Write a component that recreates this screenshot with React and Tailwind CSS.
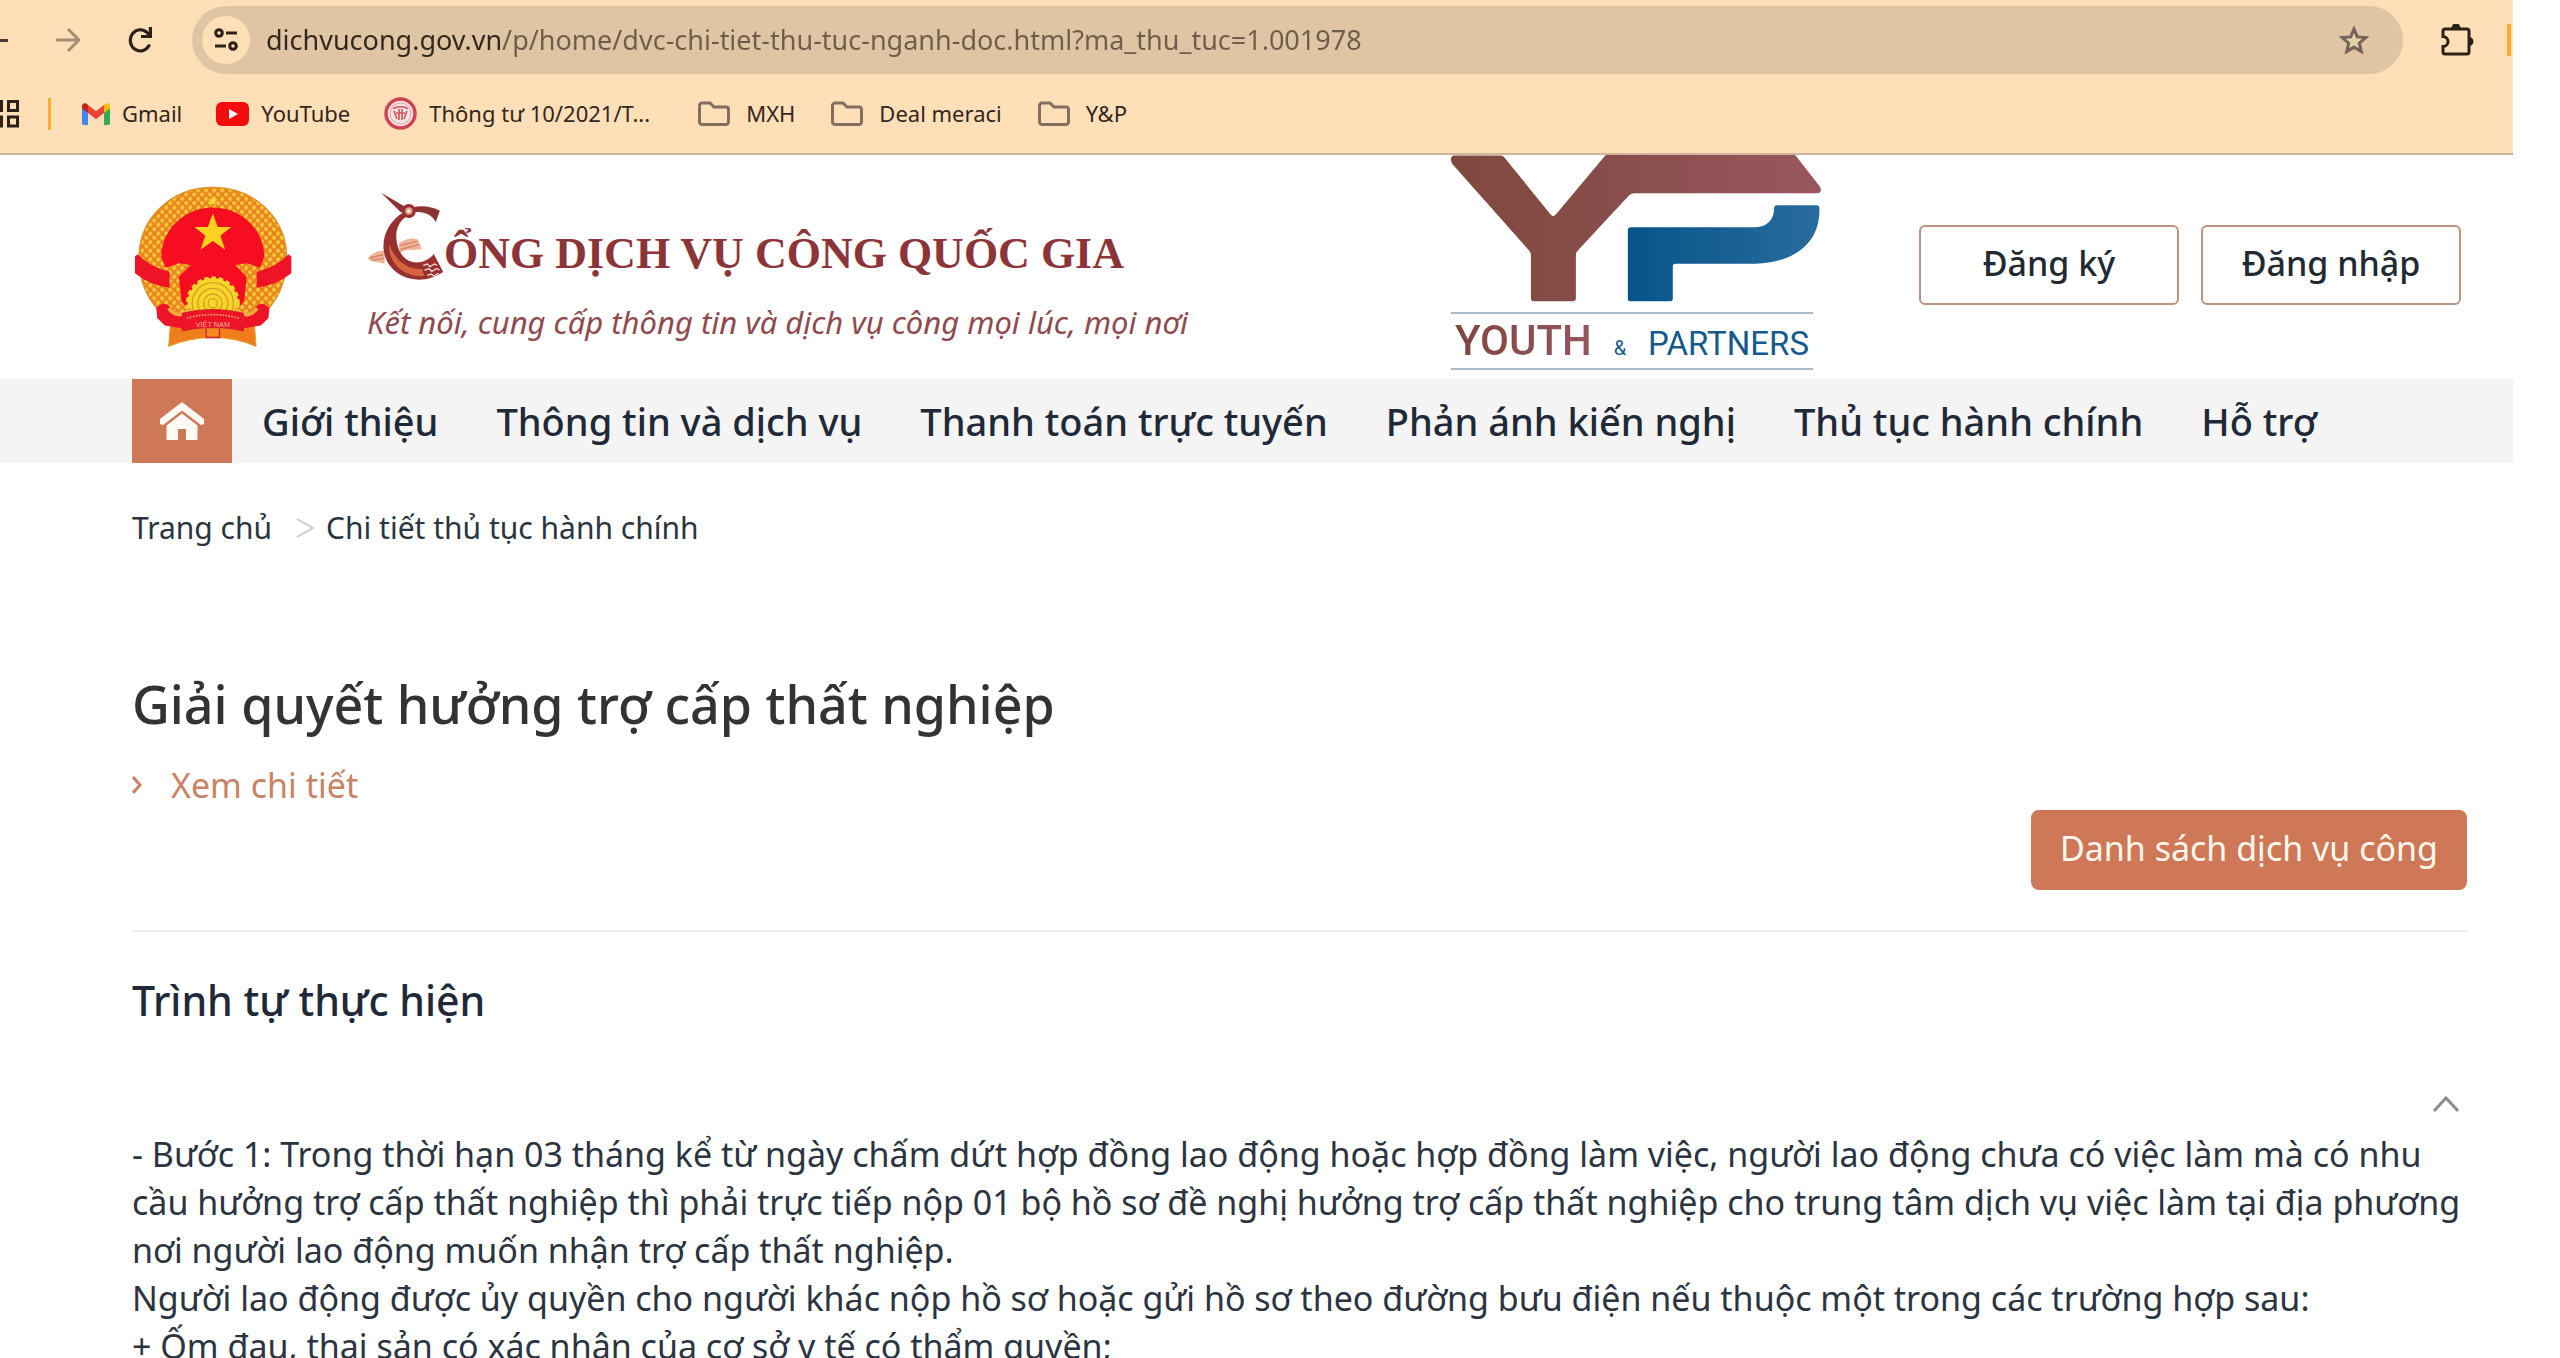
import React from "react";

const NAV_LINKS = [
  "Giới thiệu",
  "Thông tin và dịch vụ",
  "Thanh toán trực tuyến",
  "Phản ánh kiến nghị",
  "Thủ tục hành chính",
  "Hỗ trợ",
];

function ForwardIcon() {
  return (
    <svg className="h-6 w-6" viewBox="0 0 24 24" fill="none" stroke="#a58e78" strokeWidth="3">
      <path d="M0 12h22M12 1l11 11-11 11" />
    </svg>
  );
}

function ReloadIcon() {
  return (
    <svg className="h-[26px] w-6" viewBox="0 0 24 26" fill="none" stroke="#2b2117" strokeWidth="3.2">
      <path d="M21.5 17.5A10 10.6 0 1 1 19.500 6L22 9" />
      <path d="M22.400 0v9.500H13" />
    </svg>
  );
}

function TuneIcon() {
  return (
    <svg className="h-6 w-6" viewBox="0 0 24 24" fill="none" stroke="#2b2117" strokeWidth="3">
      <circle cx="5" cy="5" r="3.300" />
      <path d="M12 5h11" />
      <circle cx="19" cy="18" r="3.300" />
      <path d="M1 18h11" />
    </svg>
  );
}

function StarIcon() {
  return (
    <svg className="h-7 w-[30px]" viewBox="0 0 30 28" fill="#e3d3a0" stroke="#75625a" strokeWidth="3">
      <path d="M15 3l3.300 7.900 8.500.7-6.500 5.600 2 8.300-7.300-4.400-7.300 4.400 2-8.300-6.500-5.600 8.500-.7z" />
    </svg>
  );
}

function PuzzleIcon() {
  return (
    <svg className="h-8 w-[34px]" viewBox="0 0 34 32">
      <path d="M10.500 4a4.500 4.500 0 0 1 9 0zM28 13a4.500 4.500 0 0 1 0 9z" fill="#2b2117" />
      <path
        d="M4 5h22a2 2 0 0 1 2 2v21a2 2 0 0 1-2 2H4a2 2 0 0 1-2-2v-5.500a5 5 0 0 0 0-10V7a2 2 0 0 1 2-2z"
        fill="none"
        stroke="#2b2117"
        strokeWidth="3"
      />
    </svg>
  );
}

function AppsIcon() {
  return (
    <svg className="h-7 w-5" viewBox="0 0 20 28" fill="none" stroke="#2b2117" strokeWidth="3">
      <path d="M-6 1.500h7.500v9H-6M-6 17h7.500v9H-6" />
      <rect x="8.500" y="1.500" width="9" height="9" />
      <rect x="8.500" y="17" width="9" height="9" />
    </svg>
  );
}

function GmailIcon() {
  return (
    <svg className="h-[22px] w-7" viewBox="0 0 28 22">
      <path d="M0 5v15a2 2 0 0 0 2 2h4V8z" fill="#4285f4" />
      <path d="M28 5v15a2 2 0 0 1-2 2h-4V8z" fill="#34a853" />
      <path d="M22 2v8l6-4.500V3.500C28 .5 24.600-1 22 2z" fill="#fbbc04" />
      <path d="M6 2v8L0 5.500V3.500C0 .5 3.400-1 6 2z" fill="#c5221f" />
      <path d="M6 2l8 6.200L22 2v8l-8 6.200L6 10z" fill="#ea4335" />
    </svg>
  );
}

function YoutubeIcon() {
  return (
    <svg className="h-6 w-[33px]" viewBox="0 0 33 24">
      <rect width="33" height="24" rx="6" fill="#f40b0b" />
      <path d="M13 7l9 5-9 5z" fill="#fff" />
    </svg>
  );
}

function SealIcon() {
  return (
    <svg className="h-[33px] w-[33px]" viewBox="0 0 33 33">
      <circle cx="16.500" cy="16.500" r="14.500" fill="#f9e4e2" stroke="#cf4250" strokeWidth="3.400" />
      <circle cx="16.500" cy="16.500" r="10.500" fill="none" stroke="#e69aa0" strokeWidth="1" />
      <path d="M9 12c3-3 12-3 15 0M10 14l3 8M15 12v11M18 12v11M23 14l-3 8M12 16h9" fill="none" stroke="#cf5560" strokeWidth="1.600" />
    </svg>
  );
}

function FolderIcon() {
  return (
    <svg className="h-[26px] w-8" viewBox="0 0 32 26" fill="none" stroke="#836f60" strokeWidth="3">
      <path d="M4 2h8l4 4h12a2.500 2.500 0 0 1 2.500 2.500V21a2.500 2.500 0 0 1-2.500 2.500H4A2.500 2.500 0 0 1 1.500 21V4.500A2.500 2.500 0 0 1 4 2z" />
    </svg>
  );
}

function HomeIcon() {
  return (
    <svg className="h-[38px] w-[44px]" viewBox="0 0 44 38" fill="#fffaf3">
      <path d="M22 0L0 17v5l3 1L22 8.500 41 23l3-1v-5z" />
      <path d="M22 11.500L6.500 23.500V38H18V27h8v11h11.500V23.500z" />
    </svg>
  );
}

function Emblem() {
  return (
    <svg className="h-[165px] w-[163px] shrink-0" viewBox="95 70 490 495" role="img" aria-label="Quốc huy Việt Nam">
      <defs>
        <pattern id="grain" width="24" height="26" patternUnits="userSpaceOnUse">
          <rect width="24" height="26" fill="#e8861f" />
          <ellipse cx="6" cy="7" rx="5" ry="6.500" fill="#f9cf3a" transform="rotate(25 6 7)" />
          <ellipse cx="18" cy="20" rx="5" ry="6.500" fill="#f9cf3a" transform="rotate(-25 18 20)" />
        </pattern>
      </defs>
      <path d="M212 470L205 555Q270 528 338 528T468 555L462 470z" fill="#f07d1c" stroke="#e3a83a" strokeWidth="3" />
      <path
        d="M338 77C465 77 558 170 560 285C562 360 530 430 470 475H206C146 430 114 360 116 285C118 170 211 77 338 77z"
        fill="url(#grain)"
        stroke="#e0902a"
        strokeWidth="4"
      />
      <path
        d="M338 137C425 137 492 205 493 285L480 318L440 305L405 310L440 345L432 420L400 455H276L244 420L236 345L272 310L236 305L196 318L183 285C184 205 251 137 338 137z"
        fill="#f60d22"
      />
      <path d="M338 155L353 196L393 196L361 222L375 264L338 238L301 264L315 222L283 196L323 196z" fill="#fbd21f" />
      <path d="M338 103l4 9 10 1-8 7 3 10-9-6-9 6 3-10-8-7 10-1z" fill="#fbdc2f" />
      <circle cx="338" cy="425" r="76" fill="#f7d62c" stroke="#f7d62c" strokeWidth="10" strokeDasharray="13 9" />
      <g fill="none" stroke="#d69b23" strokeWidth="4">
        <circle cx="338" cy="425" r="62" />
        <circle cx="338" cy="425" r="45" />
        <circle cx="338" cy="425" r="28" />
        <circle cx="338" cy="425" r="14" />
      </g>
      <path d="M104 285L112 278Q150 318 208 330V378Q150 372 104 335z" fill="#ee1327" />
      <path d="M574 285L566 278Q528 318 470 330V378Q528 372 574 335z" fill="#ee1327" />
      <path d="M168 440Q190 415 210 436Q238 470 338 462Q438 470 466 436Q486 415 508 440L505 470L482 492L430 500H246L194 492L171 470z" fill="#ee1327" />
      <path d="M205 440Q238 478 272 440M471 440Q438 478 404 440" fill="none" stroke="#f2a93c" strokeWidth="12" />
      <path d="M246 455Q338 432 430 455V508Q338 486 246 508z" fill="#ee1327" stroke="#d42228" strokeWidth="3" />
      <path d="M318 498h40v30h-40z" fill="#ee8a1e" stroke="#d42228" strokeWidth="4" />
      <path d="M260 470Q338 448 416 470" fill="none" stroke="#f4a07a" strokeWidth="5" strokeDasharray="5 4" />
      <text x="338" y="495" textAnchor="middle" fontFamily="Liberation Sans, sans-serif" fontSize="22" fill="#f7b08a">
        VIỆT NAM
      </text>
    </svg>
  );
}

// The capital C of the title, drawn as a stylised crane.
function CraneC() {
  return (
    <svg className="h-[90px] w-[77px] shrink-0" viewBox="50 68 230 270" role="img" aria-label="C">
      <path d="M52 268C65 250 85 242 103 246L102 284C88 276 66 280 52 268z" fill="#eeb59a" />
      <path d="M145 222C165 206 190 204 203 212L214 240C194 244 168 236 148 252z" fill="#eeb59a" />
      <path d="M58 266l40-10M62 273l38-6M150 228l50-12M150 240l56-14" stroke="#d2825f" strokeWidth="4" fill="none" />
      <path d="M92 70L160 110L170 132L150 128z" fill="#8d3234" />
      <path d="M160 128C105 160 80 230 115 285C145 330 215 350 278 308L250 254C220 290 165 290 145 240C128 195 140 155 172 140z" fill="#98302f" />
      <path d="M116 225C112 280 160 325 222 320L215 300C170 300 135 275 116 225z" fill="#d5653c" />
      <path d="M192 112C220 108 248 112 268 124L256 158C245 136 222 126 194 128z" fill="#8d3234" />
      <circle cx="175" cy="125" r="16" fill="#e8a183" stroke="#98302f" strokeWidth="10" />
      <circle cx="175" cy="125" r="5" fill="#fff" />
      <path d="M218 288l12-4 8 8 14-8 8 4M222 302l14-4 8 8 14-8 10 4M230 318l12-4 8 6 14-8" stroke="#f3d6cf" strokeWidth="4" fill="none" />
    </svg>
  );
}

function PartnerLogo() {
  return (
    <div className="w-[370px] shrink-0 self-start">
      <svg className="h-[147px] w-full" viewBox="90 45 1111 441" role="img" aria-label="YP">
        <defs>
          <linearGradient id="wine" x1="0" x2="1">
            <stop offset="0" stopColor="#80493f" />
            <stop offset="0.400" stopColor="#874d4a" />
            <stop offset="1" stopColor="#99565f" />
          </linearGradient>
          <linearGradient id="navy" x1="0" x2="1">
            <stop offset="0" stopColor="#075489" />
            <stop offset="1" stopColor="#286c9d" />
          </linearGradient>
        </defs>
        <path
          d="M98 46H238Q246 46 251 53L388 222Q397 234 406 222L550 50Q556 42 566 42H1114Q1121 42 1126 48L1198 140Q1206 158 1190 160H640Q630 160 623 168L470 332Q465 338 465 345V474Q465 484 455 484H340Q330 484 330 474V345Q330 337 325 332L94 72Q84 50 98 46z"
          fill="url(#wine)"
        />
        <path
          d="M630 262H1005C1040 260 1060 238 1060 206Q1060 196 1070 196H1188Q1196 196 1196 204C1200 310 1120 368 1005 371H764Q756 371 756 379V476Q756 484 748 484H629Q621 484 621 476V271Q621 262 630 262z"
          fill="url(#navy)"
        />
      </svg>
      <div className="mt-[10px] flex h-[58px] w-[362px] items-baseline justify-between border-y-2 border-[#a9bccb] px-1 font-['Roboto',sans-serif] leading-[54px]">
        <span className="bg-linear-to-r from-[#80453f] to-[#965660] bg-clip-text text-[42px] font-medium text-transparent">YOUTH</span>
        <span className="text-[20px] text-[#14598c]">&amp;</span>
        <span className="text-[33px] text-[#14598c]">PARTNERS</span>
      </div>
    </div>
  );
}

function Bookmark({ icon, className, children }) {
  return (
    <a href="#" className={`flex items-center ${className}`}>
      {icon}
      {children}
    </a>
  );
}

function BrowserBar() {
  return (
    <header className="border-b-2 border-[#d0b49c] bg-[#ffdfb8] text-[#33261b]">
      <div className="flex items-center pt-[6px]">
        <div className="flex w-48 shrink-0 items-center gap-12">
          <button aria-label="Quay lại" className="h-[3px] w-2 bg-[#4a3c30]" />
          <button aria-label="Tiến"><ForwardIcon /></button>
          <button aria-label="Tải lại"><ReloadIcon /></button>
        </div>
        <div className="flex h-[68px] flex-1 items-center rounded-full bg-[#dfc5a3] pr-[34px] pl-[10px]">
          <button aria-label="Thông tin trang web" className="flex h-12 w-12 items-center justify-center rounded-full bg-[#ffdfb8]">
            <TuneIcon />
          </button>
          <input
            aria-label="Địa chỉ"
            className="ml-4 flex-1 bg-[linear-gradient(90deg,#33261b_236px,#6f5d4b_236px)] bg-clip-text text-[27px] text-transparent outline-none"
            defaultValue="dichvucong.gov.vn/p/home/dvc-chi-tiet-thu-tuc-nganh-doc.html?ma_thu_tuc=1.001978"
          />
          <button aria-label="Đánh dấu trang"><StarIcon /></button>
        </div>
        <button aria-label="Tiện ích" className="ml-[38px]"><PuzzleIcon /></button>
        <div className="mr-[2px] ml-8 h-8 w-1 bg-[#ffab2e]" />
      </div>
      <nav aria-label="Dấu trang" className="flex h-[79px] items-center text-[22px]">
        <button aria-label="Ứng dụng"><AppsIcon /></button>
        <div className="ml-7 h-8 w-[3px] bg-[#ffab2e]" />
        <div className="ml-[31px] flex items-center gap-[34px]">
          <Bookmark className="gap-3" icon={<GmailIcon />}>Gmail</Bookmark>
          <Bookmark className="gap-3" icon={<YoutubeIcon />}>YouTube</Bookmark>
          <Bookmark className="gap-3" icon={<SealIcon />}>Thông tư 10/2021/T...</Bookmark>
        </div>
        <div className="ml-12 flex items-center gap-9">
          <Bookmark className="gap-4" icon={<FolderIcon />}>MXH</Bookmark>
          <Bookmark className="gap-4" icon={<FolderIcon />}>Deal meraci</Bookmark>
          <Bookmark className="gap-4" icon={<FolderIcon />}>Y&amp;P</Bookmark>
        </div>
      </nav>
    </header>
  );
}

function SiteHeader() {
  return (
    <div className="flex h-56 items-center pr-[52px] pl-[132px]">
      <Emblem />
      <div className="ml-[72px]">
        <div className="flex items-end">
          <CraneC />
          <span className="font-['Liberation_Serif',serif] text-[44px] leading-[56px] font-bold text-[#8c3438]">
            ỔNG DỊCH VỤ CÔNG QUỐC GIA
          </span>
        </div>
        <p className="mt-5 text-[31px] leading-10 text-[#8f4a50] italic">
          Kết nối, cung cấp thông tin và dịch vụ công mọi lúc, mọi nơi
        </p>
      </div>
      <div className="ml-auto flex h-full items-center gap-[98px]">
        <PartnerLogo />
        <div className="flex gap-[22px] pb-1 text-[34px] font-medium text-[#1f2a33]">
          <button className="h-20 w-[260px] rounded-md border-2 border-[#bd9482] pb-1">Đăng ký</button>
          <button className="h-20 w-[260px] rounded-md border-2 border-[#bd9482] pb-1">Đăng nhập</button>
        </div>
      </div>
    </div>
  );
}

export default function App() {
  return (
    <div className="h-screen overflow-hidden bg-white font-['Noto_Sans',sans-serif] text-[#2b3440]">
      <div className="mr-[47px]">
        <BrowserBar />
        <SiteHeader />
        <nav aria-label="Chính" className="flex h-[84px] items-center bg-[#f4f4f5] pl-[132px] text-[38px] font-medium text-[#1f2937]">
          <a href="#" aria-label="Trang chủ" className="flex h-full w-[100px] items-center justify-center bg-[#cf7858]">
            <HomeIcon />
          </a>
          <div className="ml-[30px] flex gap-[58px]">
            {NAV_LINKS.map((label) => (
              <a key={label} href="#" className="whitespace-nowrap">{label}</a>
            ))}
          </div>
        </nav>
        <main className="pr-[46px] pl-[132px]">
          <nav aria-label="Đường dẫn" className="mt-[45px] flex items-center text-[30px] leading-10">
            <a href="#">Trang chủ</a>
            <svg className="mr-3 ml-6 h-5 w-[18px]" viewBox="0 0 18 20" fill="none" stroke="#c9c9cb" strokeWidth="2">
              <path d="M1 1l16 9-16 9" />
            </svg>
            <a href="#">Chi tiết thủ tục hành chính</a>
          </nav>
          <h1 className="mt-[120px] text-[52px] leading-[72px] font-medium text-[#333333]">
            Giải quyết hưởng trợ cấp thất nghiệp
          </h1>
          <a href="#" className="mt-[21px] inline-flex items-center gap-[29px] text-[34px] leading-12 text-[#c88364]">
            <svg className="h-5 w-[10px]" viewBox="0 0 10 20" fill="none" stroke="currentColor" strokeWidth="3">
              <path d="M1 2l7 8-7 8" />
            </svg>
            Xem chi tiết
          </a>
          <div className="mt-px flex justify-end border-b-2 border-[#f0f0f0] pb-10">
            <button className="h-20 rounded-lg bg-[#cf7858] px-[29px] pb-1 text-[34px] text-[#fff8ee]">
              Danh sách dịch vụ công
            </button>
          </div>
          <h2 className="mt-10 text-[41px] leading-[56px] font-medium text-[#1f2937]">Trình tự thực hiện</h2>
          <div className="mt-[68px] flex h-[34px] justify-end pr-2">
            <button aria-label="Thu gọn" className="self-start">
              <svg className="h-4 w-[26px]" viewBox="0 0 26 16" fill="none" stroke="#8a8d92" strokeWidth="3">
                <path d="M1 15L13 2l12 13" />
              </svg>
            </button>
          </div>
          <div className="text-[34px] leading-12">
            <p>
              - Bước 1: Trong thời hạn 03 tháng kể từ ngày chấm dứt hợp đồng lao động hoặc hợp đồng làm việc, người lao
              động chưa có việc làm mà có nhu cầu hưởng trợ cấp thất nghiệp thì phải trực tiếp nộp 01 bộ hồ sơ đề nghị
              hưởng trợ cấp thất nghiệp cho trung tâm dịch vụ việc làm tại địa phương nơi người lao động muốn nhận trợ
              cấp thất nghiệp.
            </p>
            <p>Người lao động được ủy quyền cho người khác nộp hồ sơ hoặc gửi hồ sơ theo đường bưu điện nếu thuộc một trong các trường hợp sau:</p>
            <p>+ Ốm đau, thai sản có xác nhận của cơ sở y tế có thẩm quyền;</p>
          </div>
        </main>
      </div>
    </div>
  );
}
